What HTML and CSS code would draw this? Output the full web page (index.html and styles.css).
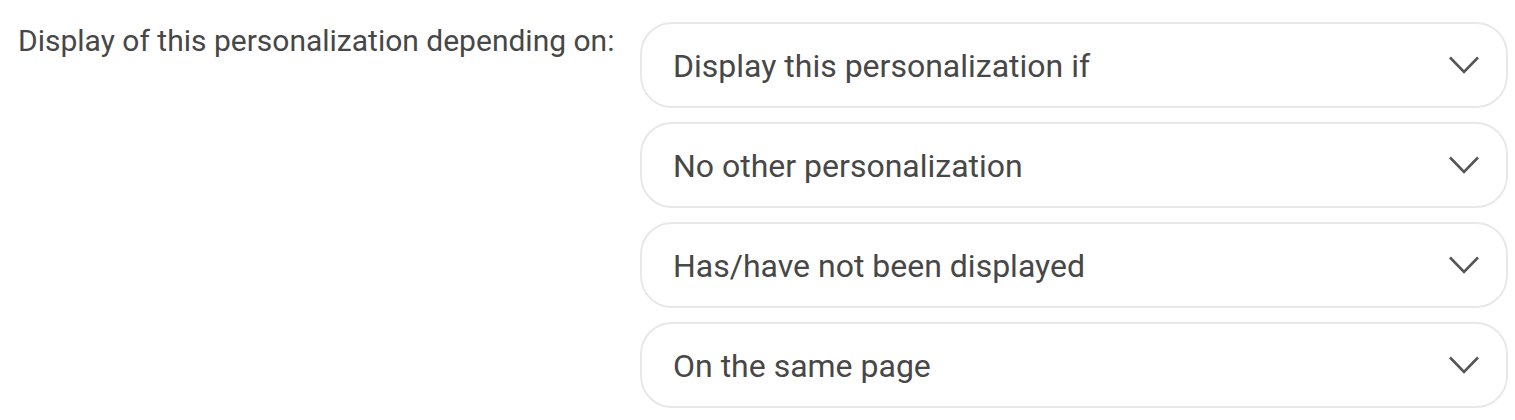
FILE: index.html
```html
<!DOCTYPE html>
<html lang="en">
<head>
    <meta charset="UTF-8">
    <title>Personalization display</title>
    <link rel="stylesheet" href="styles.css">
</head>
<body>
    <div class="field-row">
        <label class="field-label">Display of this personalization depending on:</label>
        <div class="field-controls">
            <div class="select-box">
                <span class="select-text">Display this personalization if</span>
                <svg class="chevron" viewBox="0 0 32 20"><path d="M2 2.5 L16 17 L30 2.5"/></svg>
            </div>
            <div class="select-box">
                <span class="select-text">No other personalization</span>
                <svg class="chevron" viewBox="0 0 32 20"><path d="M2 2.5 L16 17 L30 2.5"/></svg>
            </div>
            <div class="select-box">
                <span class="select-text">Has/have not been displayed</span>
                <svg class="chevron" viewBox="0 0 32 20"><path d="M2 2.5 L16 17 L30 2.5"/></svg>
            </div>
            <div class="select-box">
                <span class="select-text">On the same page</span>
                <svg class="chevron" viewBox="0 0 32 20"><path d="M2 2.5 L16 17 L30 2.5"/></svg>
            </div>
        </div>
    </div>
</body>
</html>
```

FILE: styles.css
```css
body {
    margin: 0;
    background: #fff;
    font-family: Roboto, "Liberation Sans", sans-serif;
    color: #474747;
}

.field-row {
    display: flex;
    padding: 22px 7px 0 18px;
}

.field-label {
    width: 622px;
    flex-shrink: 0;
    font-size: 30px;
    line-height: 35px;
    padding-top: 1px;
}

.field-controls {
    flex: 1;
    display: flex;
    flex-direction: column;
    gap: 14px;
}

.select-box {
    height: 86px;
    box-sizing: border-box;
    border: 2px solid #e8e8e8;
    border-radius: 32px;
    display: flex;
    align-items: center;
    justify-content: space-between;
    padding: 2px 26px 0 31px;
}

.select-text {
    font-size: 32px;
}

.chevron {
    width: 32px;
    height: 20px;
    margin-top: -2px;
    fill: none;
    stroke: #555;
    stroke-width: 2.6;
}
```
